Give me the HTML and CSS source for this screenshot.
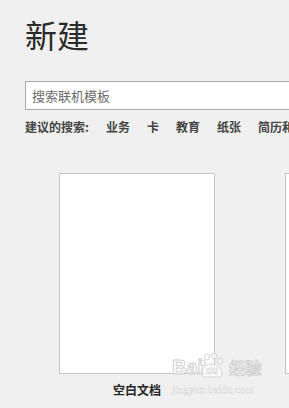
FILE: index.html
```html
<!DOCTYPE html>
<html lang="zh-CN">
    <head>
        <meta charset="UTF-8" />
        <meta name="viewport" content="width=device-width, initial-scale=1.0" />
        <title>新建</title>
        <link rel="stylesheet" href="styles.css">
    </head>
    <body>
        <div class="new-page">
            <h1>新建</h1>
            <div class="search-box">
                <input type="text" placeholder="搜索联机模板" />
            </div>
            <div class="suggest">
                <span class="suggest-label">建议的搜索:</span>
                <a href="#">业务</a>
                <a href="#">卡</a>
                <a href="#">教育</a>
                <a href="#">纸张</a>
                <a href="#">简历和求职信</a>
            </div>
            <div class="templates">
                <div class="template">
                    <div class="template-thumb"></div>
                    <p>空白文档</p>
                </div>
                <div class="template">
                    <div class="template-thumb"></div>
                </div>
            </div>
        </div>

        <div class="watermark">
            <div class="wm-logo">
                <span class="wm-bai">Bai</span>
                <svg width="26" height="26" viewBox="0 0 26 26">
                    <g fill="rgba(255,255,255,0.6)" stroke="#d2d2d2" stroke-width="1">
                        <ellipse cx="8" cy="5" rx="2.5" ry="3" />
                        <ellipse cx="15" cy="4" rx="2.5" ry="3" />
                        <ellipse cx="21" cy="9" rx="2.5" ry="3" />
                        <ellipse cx="4" cy="11" rx="2.5" ry="3" />
                        <path d="M3 22 C3 15 8 12 13 12 C18 12 23 15 23 22 C23 25 20 25 13 25 C6 25 3 25 3 22 Z" />
                    </g>
                    <text x="13" y="22" text-anchor="middle" class="wm-du">du</text>
                </svg>
                <span class="wm-jy">经验</span>
            </div>
            <div class="wm-url">jingyan.baidu.com</div>
        </div>
    </body>
</html>
```

FILE: styles.css
```css
* {
    box-sizing: border-box;
}
html,
body {
    margin: 0;
    height: 100%;
    overflow: hidden;
    background-color: #f0f0f0;
}
body {
    position: relative;
    font-family: "Noto Sans CJK SC", "Noto Sans", sans-serif;
    color: #262626;
}

.new-page {
    padding: 14px 0 0 25px;
    white-space: nowrap;
}

.new-page h1 {
    margin: 0;
    font-size: 32px;
    font-weight: normal;
    line-height: 40px;
    color: #2b2b2b;
}

.search-box {
    width: 300px;
    height: 29px;
    margin-top: 27px;
    border: 1px solid #ababab;
    background-color: #fff;
}
.search-box input {
    width: 100%;
    height: 100%;
    padding: 0 6px;
    border: 0;
    font-family: inherit;
    font-size: 13px;
    background: transparent;
    outline: none;
}
.search-box input::placeholder {
    color: #6d6d6d;
}

.suggest {
    display: flex;
    gap: 17px;
    margin-top: 9px;
    font-size: 12px;
    font-weight: bold;
    line-height: 16px;
    color: #444;
}
.suggest a {
    color: #444;
    text-decoration: none;
}

.templates {
    display: flex;
    gap: 70px;
    margin-top: 38px;
    padding-left: 34px;
}
.template {
    flex: none;
    width: 156px;
}
.template-thumb {
    height: 201px;
    border: 1px solid #c6c6c6;
    background-color: #fff;
}
.template p {
    margin: 8px 0 0;
    font-size: 12px;
    font-weight: bold;
    line-height: 16px;
    text-align: center;
}

.watermark {
    position: absolute;
    left: 172px;
    top: 351px;
    white-space: nowrap;
    pointer-events: none;
}
.wm-logo {
    display: flex;
    align-items: flex-end;
    height: 27px;
}
.wm-logo svg {
    flex: none;
    margin-left: -4px;
}
.wm-bai,
.wm-jy {
    font-family: "Liberation Sans", sans-serif;
    font-size: 20px;
    font-weight: bold;
    line-height: 22px;
    color: rgba(255, 255, 255, 0.7);
    -webkit-text-stroke: 1px #d0d0d0;
}
.wm-jy {
    margin-left: 4px;
    font-family: "Noto Sans CJK SC", sans-serif;
    font-size: 16px;
}
.wm-du {
    font-family: "Liberation Sans", sans-serif;
    font-size: 10px;
    font-weight: bold;
    fill: #fff;
    stroke: #cfcfcf;
    stroke-width: 0.5;
}
.wm-url {
    margin-top: 5px;
    font-family: "Liberation Serif", serif;
    font-size: 11px;
    line-height: 12px;
    color: rgba(255, 255, 255, 0.8);
    -webkit-text-stroke: 0.4px #d4d4d4;
}
```
